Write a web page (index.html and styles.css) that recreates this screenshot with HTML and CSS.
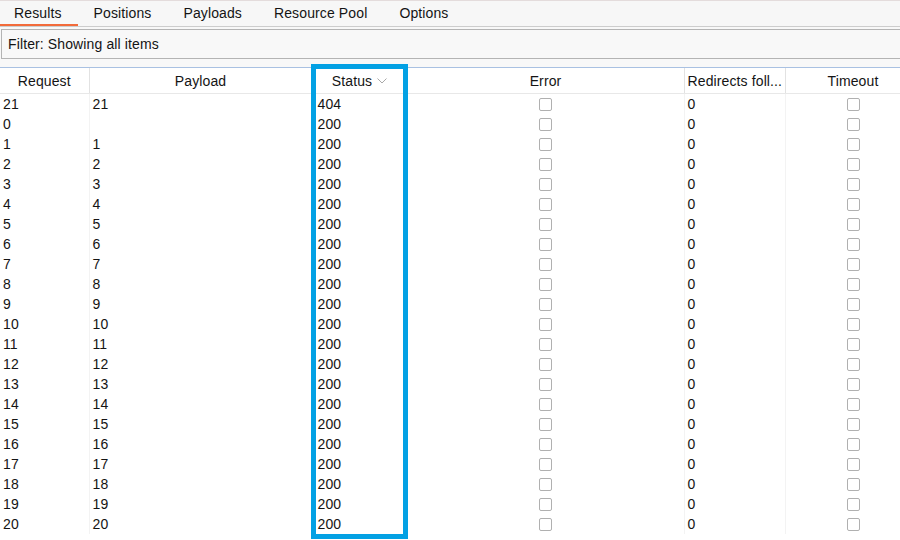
FILE: index.html
```html
<!DOCTYPE html>
<html>
<head>
<meta charset="utf-8">
<link rel="stylesheet" href="styles.css">
</head>
<body>
<div class="app">
  <div class="tabs">
    <div class="tab active">Results</div>
    <div class="tab">Positions</div>
    <div class="tab">Payloads</div>
    <div class="tab">Resource Pool</div>
    <div class="tab">Options</div>
  </div>
  <div class="filter">Filter: Showing all items</div>
  <div class="table-wrap">
    <table class="grid">
      <colgroup>
        <col class="c-req"><col class="c-pay"><col class="c-status"><col class="c-err"><col class="c-redir"><col class="c-time">
      </colgroup>
      <thead>
        <tr>
          <th>Request</th>
          <th>Payload</th>
          <th><span class="sort">Status<svg class="chev" width="10" height="6" viewBox="0 0 10 6"><polyline points="0.5,0.5 5,5 9.5,0.5" fill="none" stroke="#a8a8a8" stroke-width="1"/></svg></span></th>
          <th>Error</th>
          <th class="left">Redirects foll...</th>
          <th>Timeout</th>
        </tr>
      </thead>
      <tbody id="rows"></tbody>
    </table>
    <div class="highlight"></div>
  </div>
</div>
<script>
  var data = [["21","21","404"],["0","","200"]];
  for (var i = 1; i <= 20; i++) data.push([String(i), String(i), "200"]);
  var html = "";
  data.forEach(function (r) {
    html += '<tr><td>' + r[0] + '</td><td>' + r[1] + '</td><td class="st">' + r[2] +
      '</td><td class="ctr"><span class="cb"></span></td><td>0</td><td class="ctr"><span class="cb"></span></td></tr>';
  });
  document.getElementById("rows").innerHTML = html;
</script>
</body>
</html>
```

FILE: styles.css
```css
html, body {
  margin: 0;
  padding: 0;
  background: #f8f8f8;
}
body {
  font-family: "Liberation Sans", Arial, sans-serif;
  font-size: 14px;
  letter-spacing: 0.12px;
  color: #141414;
  width: 900px;
  height: 540px;
  overflow: hidden;
}
.app {
  position: relative;
  width: 900px;
  height: 540px;
  overflow: hidden;
}
.tabs {
  display: flex;
  border-top: 1px solid #e4dcdc;
  border-bottom: 1px solid #cdcdcd;
  background: #f7f7f7;
  height: 25px;
}
.tab {
  padding: 0 16px 0 16px;
  height: 23px;
  line-height: 24px;
  border-bottom: 2px solid transparent;
  white-space: nowrap;
}
.tab:first-child {
  padding-left: 14px;
}
.tab.active {
  border-bottom-color: #f26b3a;
}
.filter {
  margin: 2px -4px 0 1px;
  height: 28px;
  line-height: 28px;
  border: 1px solid #b4b4b4;
  background: #f8f8f8;
  padding-left: 6px;
}
.table-wrap {
  margin-top: 8px;
  border-top: 1px solid #a9c1e2;
  background: #fff;
  height: 480px;
  overflow: hidden;
}
.grid {
  border-collapse: collapse;
  table-layout: fixed;
  width: 921px;
}
.c-req { width: 89px; }
.c-pay { width: 223px; }
.c-status { width: 95px; }
.c-err { width: 277px; }
.c-redir { width: 101px; }
.c-time { width: 136px; }
.grid th {
  height: 25px;
  padding: 0 3px;
  font-weight: normal;
  text-align: center;
  border-right: 1px solid #e2e2e2;
  border-bottom: 1px solid #e8e8e8;
  white-space: nowrap;
  overflow: hidden;
}
.grid th.left {
  text-align: left;
}
.sort {
  display: inline-flex;
  align-items: center;
  gap: 5px;
  padding-left: 0;
}
.chev {
  display: block;
  margin-top: 1px;
}
.grid td {
  height: 20px;
  padding: 0 3px;
  line-height: 20px;
  border-right: 1px solid #f3f3f3;
  white-space: nowrap;
  overflow: hidden;
}
.grid td.st {
  padding-left: 5px;
}
.grid td.ctr {
  text-align: center;
  font-size: 0;
}
.cb {
  display: inline-block;
  width: 11px;
  height: 11px;
  border: 1px solid #b0b0b0;
  border-radius: 2px;
  background: #fff;
  vertical-align: middle;
}
.highlight {
  position: absolute;
  left: 311px;
  top: 64px;
  width: 87px;
  height: 465px;
  border: 5px solid #03a1e4;
  pointer-events: none;
}
```
